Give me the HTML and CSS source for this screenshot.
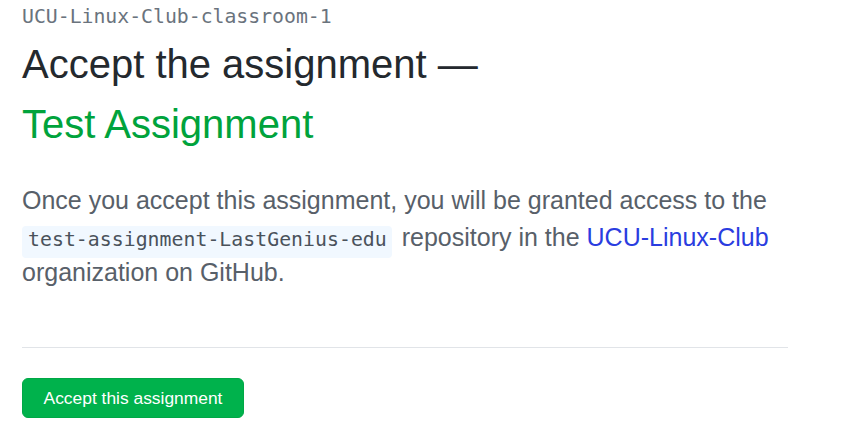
FILE: index.html
```
<!DOCTYPE html>
<html>
<head>
<meta charset="utf-8">
<link rel="stylesheet" href="styles.css">
</head>
<body>
<main class="page">
  <div class="org">UCU-Linux-Club-classroom-1</div>
  <h1 class="title first">Accept the assignment —</h1>
  <h1 class="title green">Test Assignment</h1>
  <p class="desc">Once you accept this assignment, you will be granted access to the <code class="repo">test-assignment-LastGenius-edu</code> repository in the <a class="link" href="#">UCU-Linux-Club</a> organization on GitHub.</p>
  <hr class="sep">
  <button class="btn">Accept this assignment</button>
</main>
</body>
</html>
```
FILE: styles.css
```
html, body { margin: 0; padding: 0; background: #fff; }
.page {
  padding: 0 57px 0 22px;
  font-family: "Liberation Sans", Arial, sans-serif;
  width: 766px;
}
.org {
  font-family: "DejaVu Sans Mono", monospace;
  font-size: 19.8px;
  color: #6a737d;
  line-height: 22px;
  margin-top: 6px;
}
.title {
  font-size: 40px;
  font-weight: 400;
  color: #24292e;
  margin: 0;
  line-height: 60px;
}
.title.first { margin-top: 6px; }
.title.green { color: #00a33c; }
.desc {
  font-size: 25px;
  color: #586069;
  line-height: 35px;
  margin: 29px 0 0;
}
.repo {
  display: inline-block;
  font-family: "DejaVu Sans Mono", monospace;
  font-size: 19.8px;
  letter-spacing: 0.05px;
  line-height: 20px;
  background: #f1f8ff;
  color: #4a525b;
  padding: 4px 5px 8px 6px;
  margin: 8px 3px -3px 0;
  border-radius: 4px;
}
.link { color: #2a3de0; text-decoration: none; }
.sep {
  border: 0;
  border-top: 1px solid #e1e4e8;
  margin: 57px 0 30px;
}
.btn {
  font-family: "Liberation Sans", Arial, sans-serif;
  font-size: 17.4px;
  color: #fff;
  background: #00b24c;
  border: 1px solid #00a846;
  border-radius: 6px;
  width: 222px;
  height: 40px;
  padding: 0;
}
```
